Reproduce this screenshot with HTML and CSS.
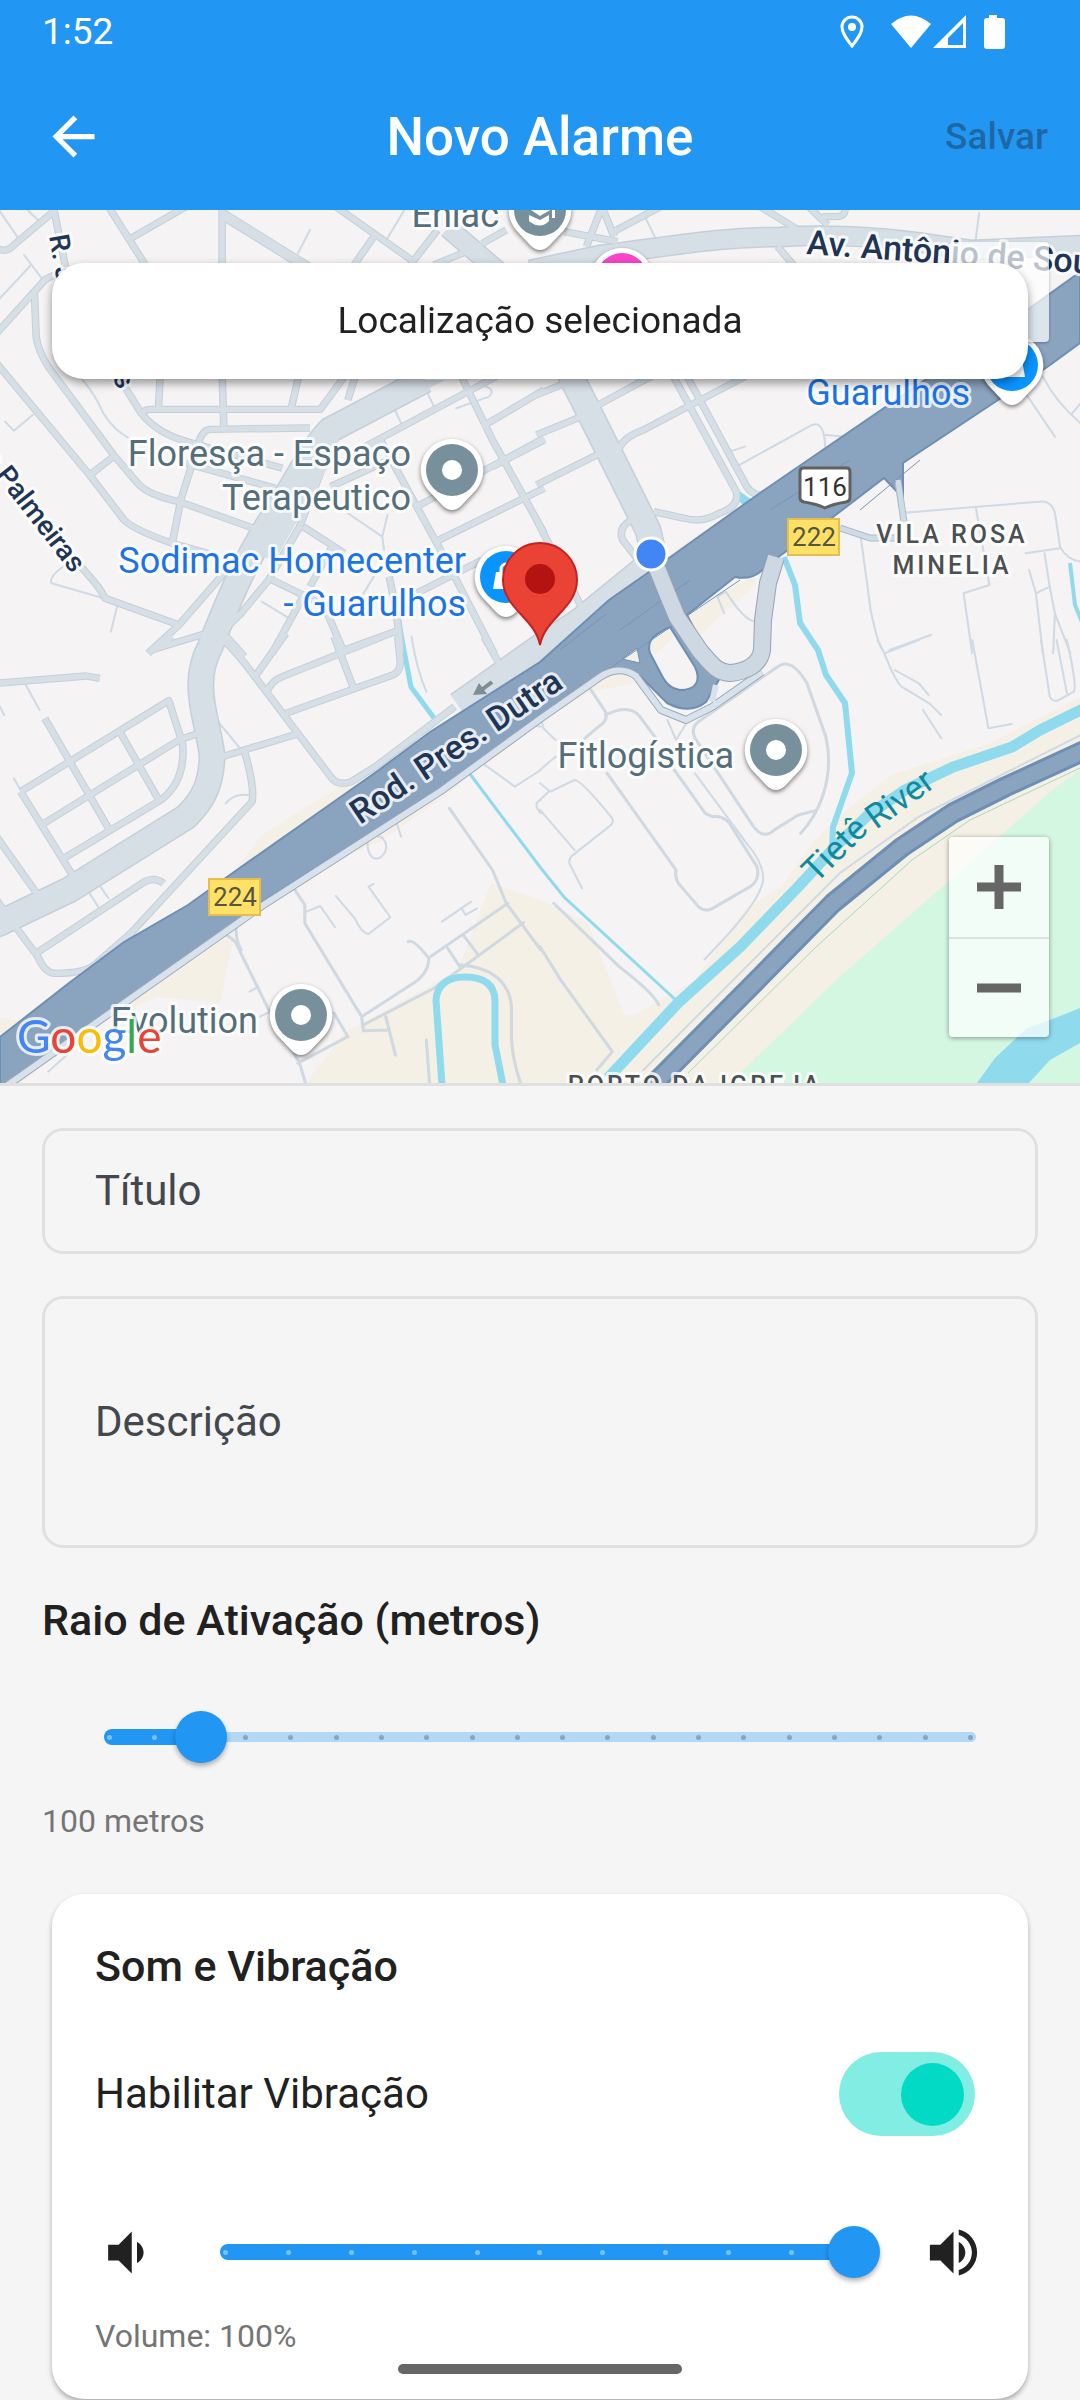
FILE: index.html
```html
<!DOCTYPE html>
<html lang="pt-BR">
<head>
<meta charset="utf-8">
<meta name="viewport" content="width=device-width, initial-scale=1">
<title>Novo Alarme</title>
<link rel="stylesheet" href="styles.css">
</head>
<body>
<header class="top">
  <div class="status">
    <span class="status__time">1:52</span>
    <svg class="status__icons" width="170" height="36" viewBox="0 0 170 36" fill="#fff" aria-hidden="true">
      <path d="M17 3a10 10 0 0 1 10 10c0 7-10 19-10 19S7 20 7 13A10 10 0 0 1 17 3z" fill="none" stroke="#fff" stroke-width="3"/>
      <circle cx="17" cy="13" r="4"/>
      <path d="M76 34 56 10Q76-7 96 10z"/>
      <path fill-rule="evenodd" d="M131 1V34H98zM128 9V31H113V24z"/>
      <path d="M154 1h8v3h5q3 0 3 3v25q0 3-3 3h-15q-3 0-3-3V7q0-3 3-3h2z"/>
    </svg>
  </div>
  <div class="bar">
    <button class="bar__back" type="button" aria-label="Voltar">
      <svg width="63" height="63" viewBox="0 0 24 24" fill="#fff"><path d="M20 11H7.83l5.59-5.59L12 4l-8 8 8 8 1.41-1.41L7.83 13H20v-2z"/></svg>
    </button>
    <h1 class="bar__title">Novo Alarme</h1>
    <button class="bar__save" type="button" disabled>Salvar</button>
  </div>
</header>

<main>
<section class="map" aria-label="Mapa">
<svg class="map__canvas" viewBox="0 0 1080 873" preserveAspectRatio="xMidYMid slice">
  <defs>
    <g id="streets">
      <g transform="matrix(.3444 0 0 .3333 0 -10)">
        <path d="M-10 145Q20 160 40 135L155 35M155 20 190 200M315 20 425 200M645 20V200M380 115 540 20M975 20 1195 180M1085 110 1025 200M1270 90 1180 210M1260 195 1400 135M1470 90 1400 130"/>
        <path d="M-10 400 130 240Q150 225 200 215M100 280 105 410Q110 450 140 500L330 765 400 850Q430 885 520 905L750 990M-10 490 260 825 360 960Q390 990 500 1030L620 1065M255 830 335 765"/>
        <path d="M350 540 410 640Q460 705 560 730L820 805M540 790 800 865M410 640Q420 628 440 628H930L1000 530M465 525 460 628M868 525 845 628M645 525 650 685M900 684 610 688Q588 690 578 725L525 900 500 1030"/>
        <path d="M225 1090Q290 1160 305 1195L520 1275 700 1060M430 1360 520 1275M440 1350 600 1300M640 1290 710 1370"/>
        <path d="M1030 534 1010 600M960 740 900 900 870 980 780 1140 700 1240 640 1300M1060 740 1440 530M1210 920 1580 715M1265 1025 1580 865M1340 530 1430 720 1580 1000M1105 720 1210 920 1300 1090M1430 800 1580 720M1400 680 1580 570M960 860 1150 770M880 980 1000 1060M790 1140 940 1215 1000 1360M970 1030 900 1160M880 1190 790 1360M1130 1130Q1160 1270 1162 1360M1210 1180 1400 1080M1320 1130 1435 1360M1000 1350 1160 1290"/>
      </g>
      <g transform="matrix(.3444 0 0 .3333 540 -10)">
        <path d="M180 20 135 140M180 20 215 110M205 100 350 20M70 95 225 125M640 20 750 90M780 20 835 75M885 20Q890 50 860 50H820M690 140 740 200"/>
        <path d="M-10 585 120 530M-10 705 125 648M-10 855 175 760M160 620 330 525M230 745Q245 710 300 690L595 530M385 525 570 875Q580 920 520 940 470 970 420 955L330 935M425 525 590 840Q610 890 650 885M265 960Q225 985 240 1020L285 1080M-10 960 120 1220"/>
      </g>
      <g transform="matrix(.3444 0 0 .3333 0 430)">
        <path d="M-10 130 250 108 290 115M440 30 500-10M60 455 490 182 530 310Q540 420 470 478L185 655M130 235 315 565M345 270 460 478M120 555 520 300 570 282M60 455 210 705M-10 590 110 765M-10 780 10 810"/>
        <path d="M640-10Q690 40 740 110L960 410Q980 440 1020 425L1090 380 1320 200M740 110 830-20M775 155Q790 120 820 110L1110-10M830 220 1140 105Q1165 95 1162 60L1155-10M970-10 1025 140M1405-10 1455 80M645 350 870 280M710 335Q740 440 732 485L380 880 280 970Q250 1000 160 1000 130 1000 110 950L45 860M105 940 420 725Q450 710 475 730"/>
      </g>
    </g>
    <g id="avenues">
      <path d="M425 170 330 220C310 240 295 275 268 315 240 360 225 400 210 437 190 475 208 510 212 545 212 585 192 600 186 607L69 680 0 713-10 717"/>
      <path d="M568 160 648 320 655 350"/>
    </g>
    <path id="marginal" d="M458 495 540 437 581 410 652 352"/>
    <path id="boulevard" d="M448 18 520 80M530 60 600 45C680 35 720 27 780 27 870 22 930 34 970 40L1085 35"/>
    <g id="lanes">
      <g transform="matrix(.3444 0 0 .3333 0 -10)"><path d="M-10 20 50 110M70 165 125 240M90 195 0 295M80 30 110 60M15 665 40 692 95 645M240 540Q280 590 300 640 330 690 375 715M865 160 900 90M1125 115 1180 20M1235 565 1260 620M1140 615 1165 670M1325 625 1420 590Q1440 570 1410 560M1010 940 1110 1010 1125 945M1110 1010 1115 1050M760 1205 840 1255M340 1220 322 1295M190 1095Q140 1130 150 1150L300 1195M1085 1130 1050 1190"/></g>
      <g transform="matrix(.3444 0 0 .3333 540 -10)"><path d="M300 40 340 125M1275 40 1265 120M570 800 790 675Q825 660 828 740M830 705 890 710M595 740 550 755M1410 580 1495 710M1460 530Q1500 610 1570 670M1545 640 1570 610M1060 938 1450 905Q1490 900 1497 950L1510 1040Q1530 1080 1570 1085M1265 920 1305 1155 1230 1180 1255 1360M930 1000 960 1230Q980 1330 995 1350M1410 1060 1510 1045M1465 1060 1480 1160 1440 1180 1420 1110M1440 1180 1460 1360M1480 1160 1495 1240 1490 1360M1495 1240 1540 1360M1015 1350 1135 1305M535 1240 515 1190 540 1175Q590 1260 625 1265"/></g>
      <g transform="matrix(.3444 0 0 .3333 0 430)"><path d="M75 135 115 210M0 200 12 225M625 235 705 335M40 415 60 450M655 490Q680 460 720 465M260 760 285 800M285 730 315 775M1195-10Q1210 90 1238 155M1395 365 1495 440 1570 390M1520 250 1570 260M1570 480Q1545 490 1570 520M1145 530 1165 590M1070 585C1060 640 1080 660 1100 655 1125 640 1130 610 1105 590Z"/><path d="M975 768 1030 835Q1050 880 1070 882L1133 832 1070 740 1085 732M890 815 930 798 973 862M1283 845 1368 785M1340 805 1352 825 1385 805M140 1295 210 1230M725 1055 750 1040M755 1130 785 1115"/></g>
      <g transform="matrix(.3444 0 0 .3333 540 430)"><path d="M980 0 1000 40 1100 0M1000 40Q1030 120 1050 140L1130 190 1165 225M1030 90 1100 130 1128 165M1112 210 1165 295M1255 0 1302 265 1370 252M1455 0 1480 170Q1490 190 1510 178L1550 155Q1560 140 1530 0M1500 0 1530 160M0 225 10 265 45 300M0 390 45 350M0 430 30 455 100 420Q120 420 210 535 215 550 200 560L90 650Q80 665 90 680L122 745M0 480 25 455M0 510 100 630M370 240 395 300 425 250M450 400 600 610Q650 670 648 720C640 780 560 870 478 958"/><path d="M1570 285 1100 530 870 700 300 1290"/></g>
    </g>
    <g id="drives">
      <g transform="matrix(.3444 0 0 .3333 0 430)"><path d="M1305 505 1430 690 1470 790 1570 930M850 740 885 795V850L1050 1130 1055 1170M1185 905Q1200 895 1245 955 1245 1000 1200 1030L1050 1130M1250 950 1475 790M1055 1155 1260 1045 1520 848M1300 925 1335 980M1345 885 1385 940M1055 1172 1130 1170 1120 1130 1148 1245M1335 975C1430 980 1480 1030 1485 1100V1200Q1490 1270 1515 1340M1238 1200 1248 1340M640 880Q680 890 690 920L790 1130 870 1270 890 1340M688 850Q680 890 700 930M865 1270 1010 1190 970 1120"/></g>
      <g transform="matrix(.3444 0 0 .3333 540 430)"><path d="M460 245 690 80Q730 50 775 130L830 290Q850 380 820 470 800 530 757 580M460 245Q430 270 460 310L620 560Q650 600 680 570L750 525 800 512M145 145 190 215Q200 240 170 260L130 295M190 225Q260 190 290 230L340 300M195 400 395 690Q390 720 410 740L460 800Q480 820 510 800L610 740Q640 720 630 680L550 550Q530 525 500 530L480 520 390 390M40 790 230 980Q330 1060 345 1095M0 920 60 1020 210 1235 165 1290"/></g>
    </g>
    <path id="highway" d="M1080 62 1027 100 760 283 669 348 609 390 540 452 430 522 379 560 227 667 188 695 124 732 69 773 0 827V883L262 692 441 578 540 507 570 488C600 460 622 450 640 466L667 493Q690 505 706 492L720 468 687 405 735 367Q750 370 760 362L781 345 833 307 884 268 903 288V253L998 190 1050 155 1080 133z"/>
    <path id="parkway" d="M1090 538 1005 577 953 603 902 637 833 693 764 763 650 878"/>
    <path id="ramp" d="M657 358 667 383 677 407 700 441C712 455 718 463 730 463 745 462 760 455 762 440L763 410 768 373 776 347"/>
    <path id="frontage" d="M-5 884 262 696 441 581 540 509 600 467C612 459 625 458 636 466L661 500 686 510 712 497 762 462"/>
    <g id="pin">
      <path class="pin__drop" d="M0-31A31 31 0 0 1 24 20L9 36Q0 44-9 36L-24 20A31 31 0 0 1 0-31z"/>
    </g>
    <g id="place"><use href="#pin"/><circle r="26" fill="#78909c"/><circle r="10" fill="#fff"/></g>
    <g id="shop"><use href="#pin"/><circle r="26" fill="#0a94ff"/><path d="M-10-5H10L13 12H-13z" fill="#fff"/><path d="M-5-4V-8A5 5 0 0 1 5-8V-4" fill="none" stroke="#fff" stroke-width="3"/></g>
  </defs>

  <!-- land -->
  <rect width="1080" height="873" fill="#f5f3f4"/>
  <g fill="#f4f0e5">
    <path d="M491 673 540 690 588 713 624 805 633 806 695 770 747 697 781 677 815 630 843 603 891 565 991 533 1080 487V873H306L344 823 458 760zM345 573 262 625 235 660 380 560zM235 720 220 793 158 787 100 812 20 873H0ZM0 808 30 812 0 830zM335 650 380 632 460 575 440 570zM668 345 720 310 740 302 745 315 640 385zM688 403 755 365 755 375 700 425 640 450z"/>
    <path d="M540 512 590 482 636 473 620 462 590 468zM1080 62V75L1050 100 1040 92z"/>
  </g>
  <path d="M1080 560 1056 577 836 770 730 873H1080z" fill="#d3f7e1"/>
  <!-- water -->
  <path d="M1080 798 1050 810 1027 818 995 848 977 873H1029L1050 850 1080 833z" fill="#90daee"/>
  <path d="M738 280 752 290 745 297 738 290z" fill="#90daee"/>

  <g class="lane"><use href="#lanes"/></g>
  <g class="drive"><use href="#drives"/></g>

  <g fill="none" stroke="#90daee">
    <path d="M1085 498 1040 520 1012 537 953 557 905 580 868 605 832 640 798 677 740 737 678 793 608 868" stroke-width="11"/>
    <path d="M784 347 795 375 800 413 818 440 826 465 845 493 852 563 833 617 832 640" stroke-width="6"/>
    <path d="M399 410 402 430 411 477 434 508" stroke-width="5"/>
    <path d="M467 560 540 657 564 687 678 792" stroke-width="3"/>
    <path d="M442 875 436 790Q438 767 465 767 494 767 495 790V835L503 875" stroke-width="7"/>
    <path d="M1070 353 1075 395 1082 412" stroke-width="4"/>
  </g>

  <g class="road road--edge"><use href="#avenues" stroke-width="27"/><use href="#marginal" stroke-width="27"/><use href="#boulevard" stroke-width="21"/><use href="#streets" stroke-width="22"/></g>
  <path class="road road--edge" d="M222 4 320 65" stroke-width="11"/>
  <g class="road"><use href="#avenues" stroke-width="24"/><use href="#marginal" stroke-width="24"/><use href="#boulevard" stroke-width="18"/><use href="#streets" stroke-width="16"/></g>
  <path class="road" d="M222 4 320 65" stroke-width="9"/>
  <path d="M425 170H445L340 225 335 245 275 350 255 345 310 225 345 205z" fill="#d6dfe6"/>

  <!-- highways -->
  <use href="#highway" fill="#8aa3bf" stroke="#6d8fb4" stroke-width="2"/>
  <path d="M670 417 695 457C701 470 697 480 680 480 668 478 664 470 660 462L650 443C646 430 655 424 670 417z" fill="#f5f3f4" stroke="#6d8fb4" stroke-width="2"/>
  <path d="M669 420 674 427 655 445 652 440C648 430 658 426 669 420z" fill="#f4f0e5"/>
  <path d="M622 449 637 438 640 453z" fill="#f4f0e5" stroke="#6d8fb4"/>
  <g fill="none" stroke="#7795b8"><path d="M610 458 740 370M620 420 690 370M770 300 850 250M860 300 920 250M560 440 606 404"/></g>
  <g fill="none" stroke-linejoin="round">
    <use href="#frontage" stroke="#9aa9b6" stroke-width="8"/><use href="#frontage" stroke="#d7e2ec" stroke-width="6"/>
    <path d="M716 475 712 492" stroke="#d7e2ec" stroke-width="6"/>
    <use href="#ramp" stroke="#94a5b2" stroke-width="18"/><use href="#ramp" stroke="#cdd8e2" stroke-width="16"/>
    <path d="M898 272 904 312M840 318 870 328H895" stroke="#a9bccb" stroke-width="7"/>
    <path d="M898 270 904 312M840 318 870 328H895" stroke="#cfdbe5" stroke-width="5"/>
    <use href="#parkway" stroke="#6d8fb4" stroke-width="21"/><use href="#parkway" stroke="#8aa3bf" stroke-width="15"/>
    <path d="M1080 558 970 610 912 650 816 737 688 863" stroke="#a5d8c0" stroke-width="1"/>
  </g>
  <path d="M492 472 480 481" stroke="#7e8c94" stroke-width="4"/>
  <path d="M473 485 479 473 487 484z" fill="#7e8c94"/>

  <!-- labels -->
  <g class="label label--road">
    <text transform="translate(360 615) rotate(-34)">Rod. Pres. Dutra</text>
    <text transform="translate(806 44) rotate(4)">Av. Antônio de Souza</text>
    <g class="label--street">
      <text transform="translate(72 364) rotate(52)" text-anchor="end">das Palmeiras</text>
      <text transform="translate(49 26) rotate(80)">R. J</text>
      <text transform="translate(112 168) rotate(60)">s</text>
    </g>
  </g>
  <text class="label label--river" transform="translate(816 674) rotate(-45)">Tietê</text>
  <text class="label label--river" transform="translate(876 620) rotate(-36)">River</text>
  <g class="label label--place" text-anchor="end">
    <text x="499" y="17">Enlac</text>
    <text x="411" y="256">Floresça - Espaço</text>
    <text x="411" y="300">Terapeutico</text>
    <text x="734" y="558">Fitlogística</text>
    <text x="258" y="823">Evolution</text>
  </g>
  <g class="label label--shop" text-anchor="end">
    <text x="466" y="363">Sodimac Homecenter</text>
    <text x="466" y="406">- Guarulhos</text>
    <text x="970" y="195">Guarulhos</text>
  </g>
  <g class="label label--area" text-anchor="middle">
    <text x="952" y="333">VILA ROSA</text>
    <text x="952" y="364">MINELIA</text>
    <text x="695" y="884">PORTO DA IGREJA</text>
  </g>

  <!-- route shields -->
  <g class="shield" text-anchor="middle">
    <path d="M803 258H847Q850 258 850 262V288Q850 291 846 292 833 294 825 298 817 294 804 292 800 291 800 288V262Q800 258 803 258z" fill="#fff" stroke="#616161" stroke-width="3"/>
    <text x="825" y="286">116</text>
    <path d="M788 309H839V345H788zM209 669H260V705H209z" fill="#ffe168" stroke="#e3bf4f" stroke-width="2"/>
    <text x="814" y="336" class="shield__km">222</text>
    <text x="235" y="696" class="shield__km">224</text>
  </g>

  <!-- markers -->
  <g class="pins">
    <use href="#place" x="452" y="260"/>
    <use href="#place" x="776" y="540"/>
    <use href="#place" x="301" y="805"/>
    <g transform="translate(540 0)"><use href="#pin"/><circle r="26" fill="#78909c"/><path d="M-15-4 0-12 15-4V8H12V-1L0 6z" fill="#fff"/><path d="M-11 5V11Q0 20 9 11V5L0 10z" fill="#fff"/></g>
    <g transform="translate(622 69)"><use href="#pin"/><circle r="26" fill="#f945c9"/></g>
    <use href="#shop" x="1012" y="155"/>
    <use href="#shop" x="506" y="367"/>
  </g>
  <circle cx="651" cy="344" r="16" fill="#4285f4" stroke="#fff" stroke-width="3"/>
  <path d="M540 333A37 37 0 0 1 577 370C577 398 545 408 540 435 535 408 503 398 503 370A37 37 0 0 1 540 333z" fill="#ea4335" stroke="#c5221f" stroke-width="2"/>
  <circle cx="540" cy="369" r="15" fill="#b31412"/>

  <text class="label brand" x="17" y="843"><tspan fill="#4285f4">G</tspan><tspan fill="#ea4335">o</tspan><tspan fill="#fbbc04">o</tspan><tspan fill="#4285f4">g</tspan><tspan fill="#34a853">l</tspan><tspan fill="#ea4335">e</tspan></text>
</svg>

  <button class="map__locate" type="button" aria-label="Minha localização"></button>
  <p class="map__card">Localização selecionada</p>
  <div class="zoom">
    <button class="zoom__button" type="button" aria-label="Aumentar zoom"><svg width="44" height="44" viewBox="0 0 44 44"><path d="M0 22H44M22 0V44"/></svg></button>
    <button class="zoom__button" type="button" aria-label="Diminuir zoom"><svg width="44" height="44" viewBox="0 0 44 44"><path d="M0 22H44"/></svg></button>
  </div>
</section>

<form class="form">
  <label class="field"><span>Título</span><input class="field__control" type="text" name="titulo"></label>
  <label class="field field--tall"><span>Descrição</span><textarea class="field__control" name="descricao" rows="3"></textarea></label>

  <section class="radius">
    <h2 class="heading" id="raio">Raio de Ativação (metros)</h2>
    <div class="slider">
      <div class="slider__track"><div class="slider__fill" style="width: 11%"></div></div>
      <div class="slider__ticks" aria-hidden="true"><i class="on"></i><i class="on"></i><i></i><i></i><i></i><i></i><i></i><i></i><i></i><i></i><i></i><i></i><i></i><i></i><i></i><i></i><i></i><i></i><i></i><i></i></div>
      <input class="slider__input" type="range" min="0" max="950" step="50" value="100" aria-labelledby="raio">
    </div>
    <p class="caption">100 metros</p>
  </section>

  <section class="card">
    <h2 class="heading">Som e Vibração</h2>
    <label class="toggle"><span>Habilitar Vibração</span><input class="switch" type="checkbox" checked></label>
    <div class="volume">
      <svg width="63" height="63" viewBox="0 0 24 24" fill="#212121" aria-hidden="true"><path d="M18.5 12c0-1.77-1.02-3.29-2.5-4.03v8.05c1.48-.73 2.5-2.25 2.5-4.02zM5 9v6h4l5 5V4L9 9H5z"/></svg>
      <div class="slider volume__slider">
        <div class="slider__track slider__track--full"><div class="slider__fill" style="width: 100%"></div></div>
        <div class="slider__ticks" aria-hidden="true"><i class="on"></i><i class="on"></i><i class="on"></i><i class="on"></i><i class="on"></i><i class="on"></i><i class="on"></i><i class="on"></i><i class="on"></i><i class="on"></i><i class="on"></i></div>
        <input class="slider__input" type="range" min="0" max="100" step="10" value="100" aria-label="Volume">
      </div>
      <svg width="63" height="63" viewBox="0 0 24 24" fill="#212121" aria-hidden="true"><path d="M3 9v6h4l5 5V4L7 9H3zm13.5 3c0-1.77-1.02-3.29-2.5-4.03v8.05c1.48-.73 2.5-2.25 2.5-4.02zM14 3.23v2.06c2.89.86 5 3.54 5 6.71s-2.11 5.85-5 6.71v2.06c4.01-.91 7-4.49 7-8.77s-2.99-7.86-7-8.77z"/></svg>
    </div>
    <p class="caption">Volume: 100%</p>
  </section>
</form>
</main>
<div class="home-indicator"></div>
</body>
</html>
```
FILE: styles.css
```css
:root {
  --blue: #2196f3;
  --ink: #212121;
  --line: #e0e0e0;
}

* { box-sizing: border-box; }

body {
  margin: 0;
  background: #f5f5f5;
  color: var(--ink);
  font-family: Roboto, "Noto Sans", sans-serif;
  font-size: 42px;
  line-height: 60px;
}

h1, h2, p { margin: 0; }

button, input, textarea { font: inherit; color: inherit; }

button { border: 0; padding: 0; background: none; }

/* status and app bar */
.top { background: var(--blue); color: #fff; }

.status {
  display: flex;
  align-items: center;
  justify-content: space-between;
  height: 63px;
  padding: 0 75px 0 42px;
  font-size: 37px;
}

.status__icons { overflow: visible; }

.bar {
  display: grid;
  grid-template-columns: 1fr auto 1fr;
  align-items: center;
  height: 147px;
  padding: 0 32px;
}

.bar__back { justify-self: start; height: 63px; padding-left: 10px; }

.bar__back svg, .zoom svg, .volume svg { display: block; }

.bar__title { font-size: 53px; font-weight: 500; }

.bar__save {
  justify-self: end;
  font-size: 37px;
  font-weight: 500;
  color: rgba(29, 27, 32, .38);
}

/* map */
.map {
  position: relative;
  height: 876px;
  border-bottom: 3px solid var(--line);
  overflow: hidden;
}

.map__canvas { display: block; width: 100%; height: 100%; }

.road { fill: none; stroke: #d6dfe6; stroke-linejoin: round; }
.road--edge { stroke: #c4d0d8; }
.lane, .drive { fill: none; stroke: #cfdae4; stroke-linejoin: round; stroke-linecap: round; }
.lane { stroke-width: 6; }
.drive { stroke: #d0d9e1; stroke-width: 9; }

.label {
  font-size: 36px;
  paint-order: stroke;
  stroke: #fff;
  stroke-opacity: .8;
  stroke-width: 6;
  stroke-linejoin: round;
}
.label--place { fill: #546e7a; }
.label--shop { fill: #1a73e8; }
.label--road { fill: #1f3556; font-size: 34px; font-weight: 500; }
.label--street { font-size: 28px; }
.label--river { fill: #0f8a9d; font-size: 34px; stroke: none; }
.label--area { fill: #4b5052; font-size: 25px; font-weight: 500; letter-spacing: 3px; }
.brand { font-family: Lato, sans-serif; font-size: 46px; }

.shield { font-size: 26px; fill: #333; }
.shield__km { fill: #555540; }

.pin__drop { fill: #fff; }
.pins { filter: drop-shadow(0 2px 2px rgba(0, 0, 0, .5)); }

.map__card {
  position: absolute;
  top: 53px;
  left: 52px;
  right: 52px;
  padding: 28px;
  border-radius: 32px;
  background: #fff;
  box-shadow: 0 4px 10px rgba(0, 0, 0, .4);
  font-size: 37px;
  text-align: center;
}

.map__locate {
  position: absolute;
  top: 32px;
  right: 31px;
  width: 100px;
  height: 100px;
  border-radius: 4px;
  background: rgba(255, 255, 255, .7);
  box-shadow: 0 1px 3px rgba(0, 0, 0, .3);
}

.zoom {
  position: absolute;
  right: 31px;
  bottom: 46px;
  display: flex;
  flex-direction: column;
  width: 100px;
  border-radius: 4px;
  background: rgba(255, 255, 255, .72);
  box-shadow: 0 1px 5px rgba(0, 0, 0, .4);
}

.zoom__button { display: grid; place-items: center; height: 100px; }
.zoom__button + .zoom__button { border-top: 2px solid rgba(0, 0, 0, .1); }
.zoom path { stroke: #666; stroke-width: 9; }

/* form */
.form {
  display: flex;
  flex-direction: column;
  gap: 42px;
  padding: 42px 42px 2px;
}

.field {
  display: flex;
  align-items: center;
  gap: 24px;
  min-height: 126px;
  padding: 0 50px;
  border: 3px solid var(--line);
  border-radius: 21px;
  color: #43474e;
}

.field--tall { min-height: 252px; }

.field__control {
  flex: 1;
  min-width: 0;
  padding: 0;
  border: 0;
  outline: 0;
  resize: none;
  background: transparent;
}

.heading { font-size: 43px; font-weight: 500; line-height: 60px; }

.caption { font-size: 32px; line-height: 42px; color: #757575; }

.slider {
  display: grid;
  align-items: center;
  height: 126px;
}

.slider > * { grid-area: 1 / 1; }

.radius .slider { margin: 24px 42px 0; }

.slider__track {
  display: flex;
  align-items: center;
  height: 10px;
  margin: 0 20px;
  border-radius: 5px;
  background: #b3d8f5;
}

.slider__track--full { margin-right: 26px; }

.slider__fill { height: 16px; border-radius: 8px; background: var(--blue); }

.slider__ticks {
  display: flex;
  justify-content: space-between;
  margin: 0 23px;
}

.slider__ticks i { width: 5px; height: 5px; border-radius: 50%; background: #86a5bf; }
.slider__ticks .on { background: #7cc0f8; }

.slider__input {
  appearance: none;
  width: 100%;
  height: 52px;
  margin: 0;
  background: transparent;
}

.slider__input::-webkit-slider-thumb {
  appearance: none;
  width: 52px;
  height: 52px;
  border-radius: 50%;
  background: var(--blue);
  box-shadow: 0 3px 5px rgba(0, 0, 0, .3);
}

.card {
  margin: 10px 10px 0;
  padding: 42px 43px;
  border-radius: 32px;
  background: #fff;
  box-shadow: 0 3px 5px rgba(0, 0, 0, .3);
}

.toggle {
  display: flex;
  align-items: center;
  justify-content: space-between;
  margin-top: 56px;
  padding-right: 10px;
}

.switch {
  appearance: none;
  display: flex;
  align-items: center;
  justify-content: flex-end;
  width: 136px;
  height: 84px;
  margin: 0;
  padding: 0 11px;
  border-radius: 42px;
  background: #82ede3;
}

.switch::before {
  content: "";
  width: 63px;
  height: 63px;
  border-radius: 50%;
  background: #03dac6;
}

.volume {
  display: flex;
  align-items: center;
  margin-top: 53px;
}

.volume__slider { flex: 1; margin: 0 42px; }

.home-indicator {
  position: fixed;
  bottom: 26px;
  left: 50%;
  width: 284px;
  height: 10px;
  margin-left: -142px;
  border-radius: 5px;
  background: #666;
}
```
